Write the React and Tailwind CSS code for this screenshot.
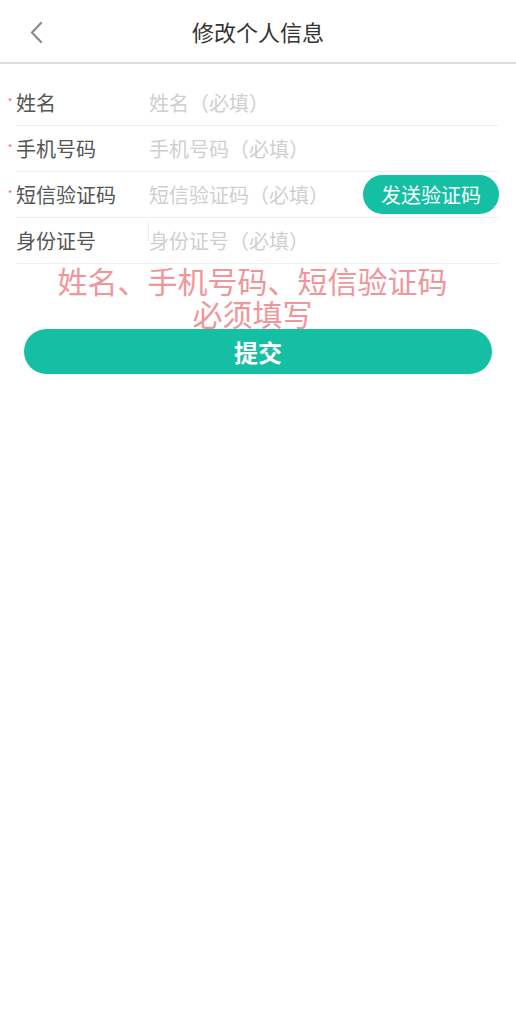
import React from "react";

const font = { fontFamily: '"Noto Sans CJK SC", "Microsoft YaHei", sans-serif' };

function Row({ required, label, placeholder, children, cursor }) {
  return (
    <div className="relative flex h-[46px] items-center border-b border-[#f0f0f0]">
      {required && (
        <span className="absolute left-[-8px] top-[17px] text-[9px] leading-none text-[#f05a6e]">*</span>
      )}
      <div className="w-[133px] shrink-0 text-[20px] leading-none text-[#555]">{label}</div>
      <div className="relative flex-1 text-[20px] leading-none text-[#cfcfcf]">
        {cursor && <span className="absolute left-[-1px] top-[-10px] h-[20px] w-px bg-[#eee]" />}
        {placeholder}
      </div>
      {children}
    </div>
  );
}

export default function App() {
  return (
    <div className="min-h-[1019px] w-full bg-white" style={font}>
      <div className="relative flex h-[64px] items-center justify-center border-b-2 border-[#dcdcdc]">
        <svg
          className="absolute left-[28px] top-[21px]"
          width="18"
          height="22"
          viewBox="0 0 18 22"
          fill="none"
        >
          <path d="M13 2 L4 11.5 L13 21" stroke="#8a8a8a" strokeWidth="2.2" strokeLinecap="round" strokeLinejoin="round" />
        </svg>
        <span className="text-[22px] leading-none text-[#333]">修改个人信息</span>
      </div>

      <div className="ml-[16px] mr-[17px] mt-[16px]">
        <Row required label="姓名" placeholder="姓名（必填）" />
        <Row required label="手机号码" placeholder="手机号码（必填）" />
        <Row required label="短信验证码" placeholder="短信验证码（必填）">
          <button className="flex h-[39px] w-[136px] shrink-0 items-center justify-center rounded-full bg-[#14bfa4] text-[20px] leading-none text-white">
            发送验证码
          </button>
        </Row>
        <Row label="身份证号" placeholder="身份证号（必填）" cursor />
      </div>

      <p className="h-[65px] pr-[11px] text-center text-[30px] leading-[33px] text-[#f0969b]">
        姓名、手机号码、短信验证码
        <br />
        必须填写
      </p>

      <div className="px-[24px]">
        <button className="flex h-[45px] w-full items-center justify-center rounded-full bg-[#14bfa4] text-[24px] font-bold leading-none text-white">
          提交
        </button>
      </div>
    </div>
  );
}
